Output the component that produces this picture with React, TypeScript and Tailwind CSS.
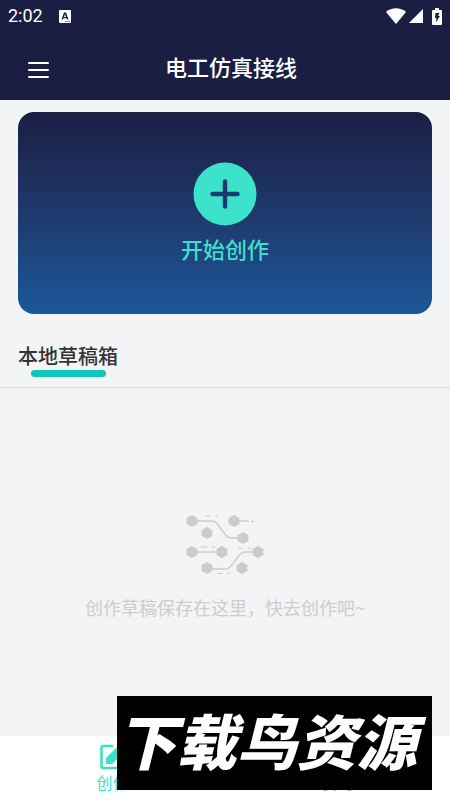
import type { ReactNode } from "react";

const hexagons = [
  [22, 21],
  [64, 21],
  [37, 33],
  [73, 38],
  [22, 52],
  [52, 52],
  [88, 52],
  [37, 68],
  [72, 68],
];

function StatusBar() {
  return (
    <div className="flex h-8 items-center justify-between px-2 text-white">
      <div className="flex items-center gap-4">
        <span className="font-[Roboto,sans-serif] text-lg leading-8">2:02</span>
        <svg viewBox="0 0 12 13" className="h-[13px] w-3" aria-hidden="true">
          <rect width="12" height="13" rx="1" fill="currentColor" />
          <path d="M2.500 9.500 5 2.500h2l2.500 7H8l-.4-1.300H4.400L4 9.500zM4.900 7h2.200L6 4.200z" fill="#1a1e43" />
          <path d="M6 11.500h5" stroke="#8d90ab" strokeWidth="1" />
        </svg>
      </div>
      <div className="flex items-center" aria-hidden="true">
        <svg viewBox="0 0 20 16" className="h-4 w-5">
          <path d="M0 4C5.500-1 14.500-1 20 4L10 16z" fill="currentColor" />
        </svg>
        <svg viewBox="0 0 14 14" className="ml-[3px] h-[14px] w-[14px]">
          <path d="M14 0v14H0z" fill="currentColor" />
        </svg>
        <svg viewBox="0 0 10 17" className="ml-[9px] h-[17px] w-[10px]">
          <path d="M3 0h4v2h2a1 1 0 0 1 1 1v13a1 1 0 0 1-1 1H1a1 1 0 0 1-1-1V3a1 1 0 0 1 1-1h2z" fill="currentColor" />
          <path d="M3.500 5h4L6 8h2l-4.200 6.500L4.500 10H3z" fill="#1a1e43" />
        </svg>
      </div>
    </div>
  );
}

function EmptyCircuit() {
  return (
    <svg viewBox="0 0 110 85" className="h-[85px] w-[110px] text-[#cbcccd]" fill="none" aria-hidden="true">
      <g stroke="currentColor" strokeWidth="1.400">
        <path d="M22 21h19c4 0 5 1 7 4l7 9c2 3 3 4 6 4h12" />
        <path d="M64 21h15M81 21.500h3" />
        <path d="M22 52h30" />
        <path d="M37 69h18c3 0 4-1 6-3l7-9c3-4 4-5 7-5h13" />
        <path
          d="M35 16h6M45 16h3M31 47h7M42 47h3M68 48h5M78 48h3M47 73.500h6M57 73.500h3"
          strokeWidth="1.200"
        />
      </g>
      {hexagons.map(([x, y]) => (
        <path
          key={`${x}-${y}`}
          d="M0-6 5.400-3V3L0 6-5.400 3V-3z"
          transform={`translate(${x} ${y})`}
          fill="currentColor"
        />
      ))}
    </svg>
  );
}

function EditIcon() {
  return (
    <svg viewBox="0 0 26 26" className="h-[26px] w-[26px]" fill="none" aria-hidden="true">
      <path
        d="M13 2H3a1.500 1.500 0 0 0-1.500 1.500v19A1.500 1.500 0 0 0 3 24h19a1.500 1.500 0 0 0 1.500-1.500V12"
        stroke="currentColor"
        strokeWidth="2.600"
      />
      <path d="M6 20v-6L19 1l6 6-13 13z" fill="currentColor" />
    </svg>
  );
}

function UserIcon() {
  return (
    <svg viewBox="0 0 26 26" className="h-[26px] w-[26px]" fill="none" stroke="currentColor" strokeWidth="2" aria-hidden="true">
      <circle cx="13" cy="8" r="5" />
      <path d="M3 24c0-6 4-9 10-9s10 3 10 9" />
    </svg>
  );
}

function Tab({ label, active, children }: { label: string; active?: boolean; children: ReactNode }) {
  return (
    <a
      href="#"
      aria-current={active ? "page" : undefined}
      className={`flex flex-1 flex-col items-center pt-2 ${active ? "text-[#3cdfc8]" : "text-[#aaaaaa]"}`}
    >
      {children}
      <span className="text-base leading-6">{label}</span>
    </a>
  );
}

export default function App() {
  return (
    <div className="relative flex min-h-screen flex-col bg-[#f2f4f6] font-['Noto_Sans_CJK_SC',sans-serif]">
      <header className="bg-[#1a1e43] text-white">
        <StatusBar />
        <div className="grid h-[68px] grid-cols-[1fr_auto_1fr] items-center px-7">
          <button type="button" aria-label="菜单" className="mt-2 grid w-[21px] gap-[5px]">
            <span className="h-[2px] rounded-full bg-white" />
            <span className="h-[2px] rounded-full bg-white" />
            <span className="h-[2px] rounded-full bg-white" />
          </button>
          <h1 className="pb-px pl-3 text-[22px] leading-8 font-medium">电工仿真接线</h1>
        </div>
      </header>

      <main className="flex flex-1 flex-col">
        <button
          type="button"
          className="mx-[18px] mt-3 flex h-[202px] flex-col items-center rounded-2xl bg-linear-to-b from-[#1a1e43] to-[#1a5799] pt-[50px] text-[#3fdfcb]"
        >
          <svg viewBox="0 0 64 64" className="h-16 w-16" aria-hidden="true">
            <circle cx="32" cy="32" r="31.500" fill="#3ce2c9" />
            <path d="M32 19.500v25M19.500 32h25" stroke="#1b3970" strokeWidth="4.400" strokeLinecap="round" />
          </svg>
          <span className="mt-[6px] text-[22px] leading-8 font-medium">开始创作</span>
        </button>

        <section className="flex flex-1 flex-col">
          <div className="border-b border-[#d8dadc] px-[18px] pt-7 pb-[10px]">
            <h2 className="text-xl leading-7 font-medium text-[#333333]">本地草稿箱</h2>
            <div className="ml-[13px] h-[7px] w-[75px] rounded-full bg-[#0fc8b8]" />
          </div>
          <div className="flex flex-1 flex-col items-center pt-28">
            <EmptyCircuit />
            <p className="mt-2 text-lg leading-7 text-[#cccccc]">创作草稿保存在这里，快去创作吧~</p>
          </div>
        </section>
      </main>

      <nav className="flex h-16 bg-white">
        <Tab label="创作" active>
          <EditIcon />
        </Tab>
        <Tab label="我的">
          <UserIcon />
        </Tab>
      </nav>

      <div className="absolute right-[18px] bottom-[10px] left-[26%] flex h-[94px] items-center justify-center overflow-hidden bg-black pr-4 pb-2 whitespace-nowrap text-white">
        <span className="text-[60px] leading-none font-black italic">下载鸟资源</span>
      </div>
    </div>
  );
}
